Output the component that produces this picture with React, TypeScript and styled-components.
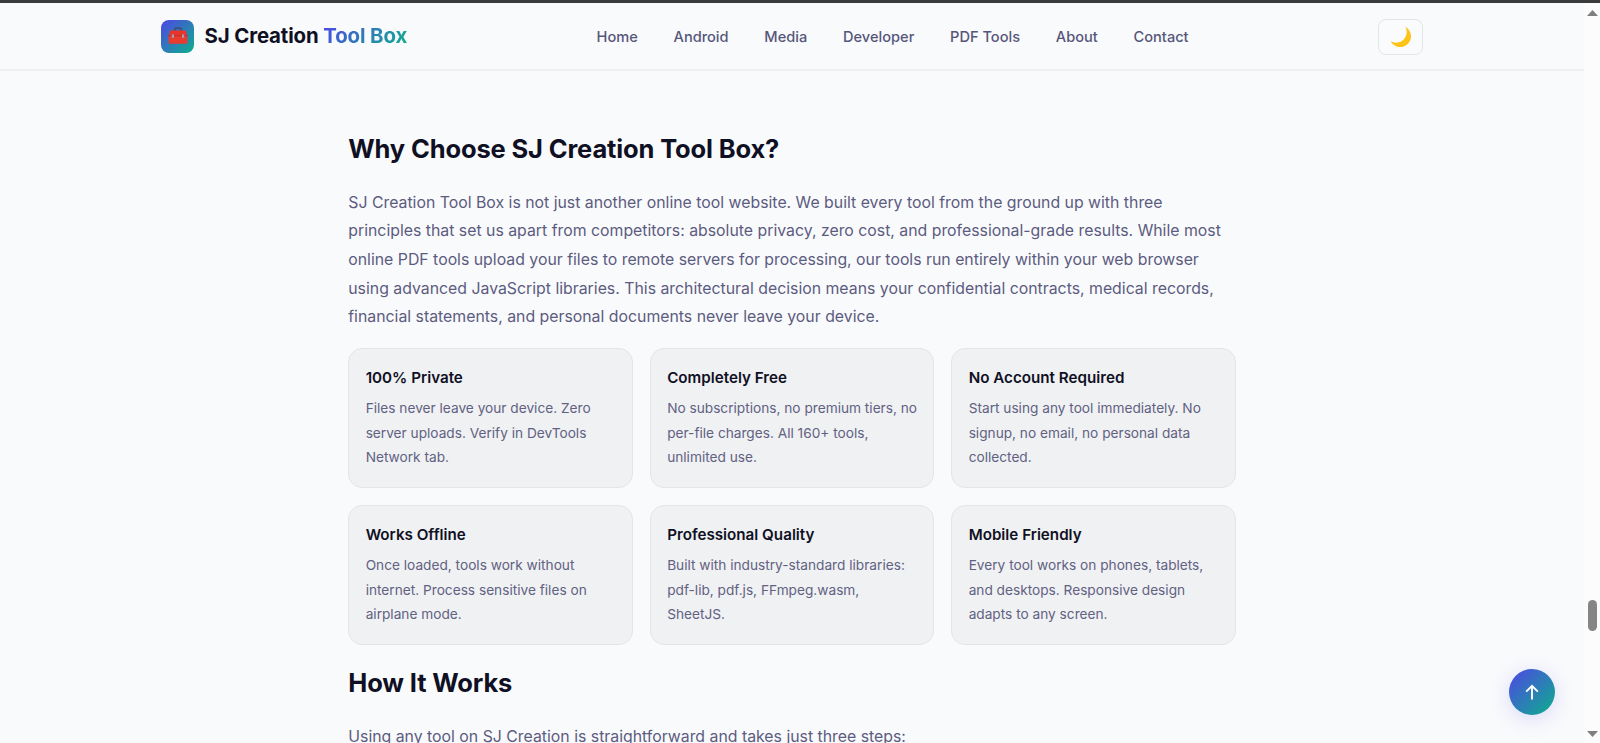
import React from "react";
import styled, { createGlobalStyle } from "styled-components";

const Global = createGlobalStyle`
  *, *::before, *::after { box-sizing: border-box; }
  html, body { margin: 0; overflow: hidden; background: #f9fafc; }
  body { font-family: Inter, "Liberation Sans", sans-serif; color: #0f1023; }
`;

const brandGradient = "linear-gradient(135deg, #4f46e5, #0cb08c)";

const Window = styled.div`
  height: 743px;
  display: flex;
  overflow: hidden;
  border-top: 3px solid #3b3b3d;
  position: relative;
`;
const Page = styled.div`
  flex: 1;
  min-width: 0;
  overflow: hidden;
`;
const Header = styled.header`
  height: 68px;
  border-bottom: 2px solid #eef0f2;
  padding: 1px 161px 0;
  display: flex;
  justify-content: space-between;
  align-items: center;
`;
const Brand = styled.div`
  display: flex;
  align-items: center;
  gap: 10.5px;
  font-size: 20.4px;
  font-weight: 700;
  line-height: 33px;
  letter-spacing: -0.12px;
  white-space: nowrap;
  margin-top: -1px;
`;
const BrandMark = styled.span`
  width: 33px;
  height: 33px;
  border-radius: 8px;
  background: ${brandGradient};
  display: grid;
  place-items: center;
`;
const BrandName = styled.span`
  margin-top: -1px;
`;
const BrandAccent = styled.span`
  background: ${brandGradient};
  background-clip: text;
  -webkit-background-clip: text;
  color: transparent;
`;
const Nav = styled.nav`
  display: flex;
  gap: 35.8px;
  padding-top: 1px;
`;
const NavLink = styled.a`
  font-size: 14.6px;
  font-weight: 500;
  line-height: 24px;
  color: #56567a;
  white-space: nowrap;
`;
const ThemeButton = styled.button`
  width: 45px;
  height: 36px;
  padding: 0;
  border: 1px solid #e4e5e9;
  border-radius: 8px;
  background: #fafbfc;
  display: grid;
  place-items: center;
`;
const Article = styled.main`
  width: 887.5px;
  margin: 0 auto;
  padding-top: 57px;
`;
const Heading = styled.h2<{ $top?: number }>`
  margin: ${(p) => p.$top ?? 0}px 0 0;
  font-size: 25.5px;
  line-height: 42px;
  font-weight: 700;
  letter-spacing: -0.14px;
`;
const Paragraph = styled.p`
  margin: 18.8px 0 0;
  font-size: 15.845px;
  line-height: 28.6px;
  color: #5c5c80;
  white-space: nowrap;
`;
const Cards = styled.div`
  display: grid;
  grid-template-columns: repeat(3, minmax(0, 1fr));
  gap: 17px;
  margin-top: 16.2px;
`;
const Card = styled.section`
  height: 140px;
  padding: 17px 16.4px;
  border: 1px solid #e4e5e8;
  border-radius: 14px;
  background: #f0f1f3;
`;
const CardTitle = styled.h3`
  margin: 0;
  font-size: 15.2px;
  line-height: 24px;
  font-weight: 600;
`;
const CardText = styled.p`
  margin: 6.2px 0 0;
  font-size: 13.68px;
  line-height: 24.5px;
  color: #616182;
  white-space: nowrap;
`;
const Scrollbar = styled.div`
  width: 16px;
  background: #fcfcfc;
  display: flex;
  flex-direction: column;
  align-items: center;
  padding: 7px 0 6px;
`;
const Thumb = styled.div`
  width: 9px;
  height: 31px;
  border-radius: 5px;
  background: #858585;
  margin: 583.5px 0 auto;
`;
const ToTop = styled.button`
  position: absolute;
  right: 45px;
  bottom: 28px;
  width: 46px;
  height: 46px;
  padding: 0;
  border: 0;
  border-radius: 50%;
  background: ${brandGradient};
  box-shadow: 0 4px 20px rgba(79, 70, 229, 0.18);
  display: grid;
  place-items: center;
`;

const Toolbox = () => (
  <svg width="20" height="18" viewBox="0 0 20 18">
    <path d="M6.6 4V2.5Q6.6 1.2 8 1.2h4q1.4 0 1.4 1.3V4" fill="none" stroke="#3d4560" strokeWidth="1.2" />
    <path d="M2.2 3.6h15.6l1.3 5.2H.9z" fill="#e8352b" />
    <path d="M.6 8.2h18.8v7.6q0 1-1 1H1.6q-1 0-1-1z" fill="#e83a2e" />
    <path d="M.6 8.3h18.8v.9H.6z" fill="#c02a2c" />
    <path d="M3.8 7.6h2.2v3.2H3.8zM14 7.6h2.2v3.2H14z" fill="#a9a0a8" />
  </svg>
);
const Moon = () => (
  <svg width="22" height="22" viewBox="0 0 22 22">
    <path d="M15.4.8A10.8 10.8 0 1 1 .6 15.2 10.7 10.7 0 0 0 15.4.8z" fill="#fdc316" />
  </svg>
);
const UpArrow = () => (
  <svg width="14" height="16" viewBox="0 0 14 16" fill="none" stroke="#fff" strokeWidth="1.9">
    <path d="M7 15.5V2M1.2 7.6 7 1.8l5.8 5.8" />
  </svg>
);
const ScrollArrow = ({ down = false }: { down?: boolean }) => (
  <svg width="11" height="6" viewBox="0 0 11 6">
    <path d={down ? "M0 0h11L5.5 6z" : "M0 6h11L5.5 0z"} fill="#7f7f7f" />
  </svg>
);

const links = ["Home", "Android", "Media", "Developer", "PDF Tools", "About", "Contact"];
const intro = [
  "SJ Creation Tool Box is not just another online tool website. We built every tool from the ground up with three",
  "principles that set us apart from competitors: absolute privacy, zero cost, and professional-grade results. While most",
  "online PDF tools upload your files to remote servers for processing, our tools run entirely within your web browser",
  "using advanced JavaScript libraries. This architectural decision means your confidential contracts, medical records,",
  "financial statements, and personal documents never leave your device.",
];
const features = [
  { title: "100% Private", lines: ["Files never leave your device. Zero", "server uploads. Verify in DevTools", "Network tab."] },
  { title: "Completely Free", lines: ["No subscriptions, no premium tiers, no", "per-file charges. All 160+ tools,", "unlimited use."] },
  { title: "No Account Required", lines: ["Start using any tool immediately. No", "signup, no email, no personal data", "collected."] },
  { title: "Works Offline", lines: ["Once loaded, tools work without", "internet. Process sensitive files on", "airplane mode."] },
  { title: "Professional Quality", lines: ["Built with industry-standard libraries:", "pdf-lib, pdf.js, FFmpeg.wasm,", "SheetJS."] },
  { title: "Mobile Friendly", lines: ["Every tool works on phones, tablets,", "and desktops. Responsive design", "adapts to any screen."] },
];

const Lines = ({ lines }: { lines: string[] }) => (
  <>
    {lines.map((line, i) => (
      <React.Fragment key={line}>
        {i > 0 && <br />}
        {line}
      </React.Fragment>
    ))}
  </>
);

export default function App() {
  return (
    <Window>
      <Global />
      <Page>
        <Header>
          <Brand>
            <BrandMark><Toolbox /></BrandMark>
            <BrandName>SJ Creation <BrandAccent>Tool Box</BrandAccent></BrandName>
          </Brand>
          <Nav>{links.map((l) => <NavLink key={l}>{l}</NavLink>)}</Nav>
          <ThemeButton aria-label="Toggle theme"><Moon /></ThemeButton>
        </Header>
        <Article>
          <Heading>Why Choose SJ Creation Tool Box?</Heading>
          <Paragraph><Lines lines={intro} /></Paragraph>
          <Cards>
            {features.map((f) => (
              <Card key={f.title}>
                <CardTitle>{f.title}</CardTitle>
                <CardText><Lines lines={f.lines} /></CardText>
              </Card>
            ))}
          </Cards>
          <Heading $top={17}>How It Works</Heading>
          <Paragraph>Using any tool on SJ Creation is straightforward and takes just three steps:</Paragraph>
        </Article>
      </Page>
      <Scrollbar>
        <ScrollArrow />
        <Thumb />
        <ScrollArrow down />
      </Scrollbar>
      <ToTop aria-label="Back to top"><UpArrow /></ToTop>
    </Window>
  );
}
